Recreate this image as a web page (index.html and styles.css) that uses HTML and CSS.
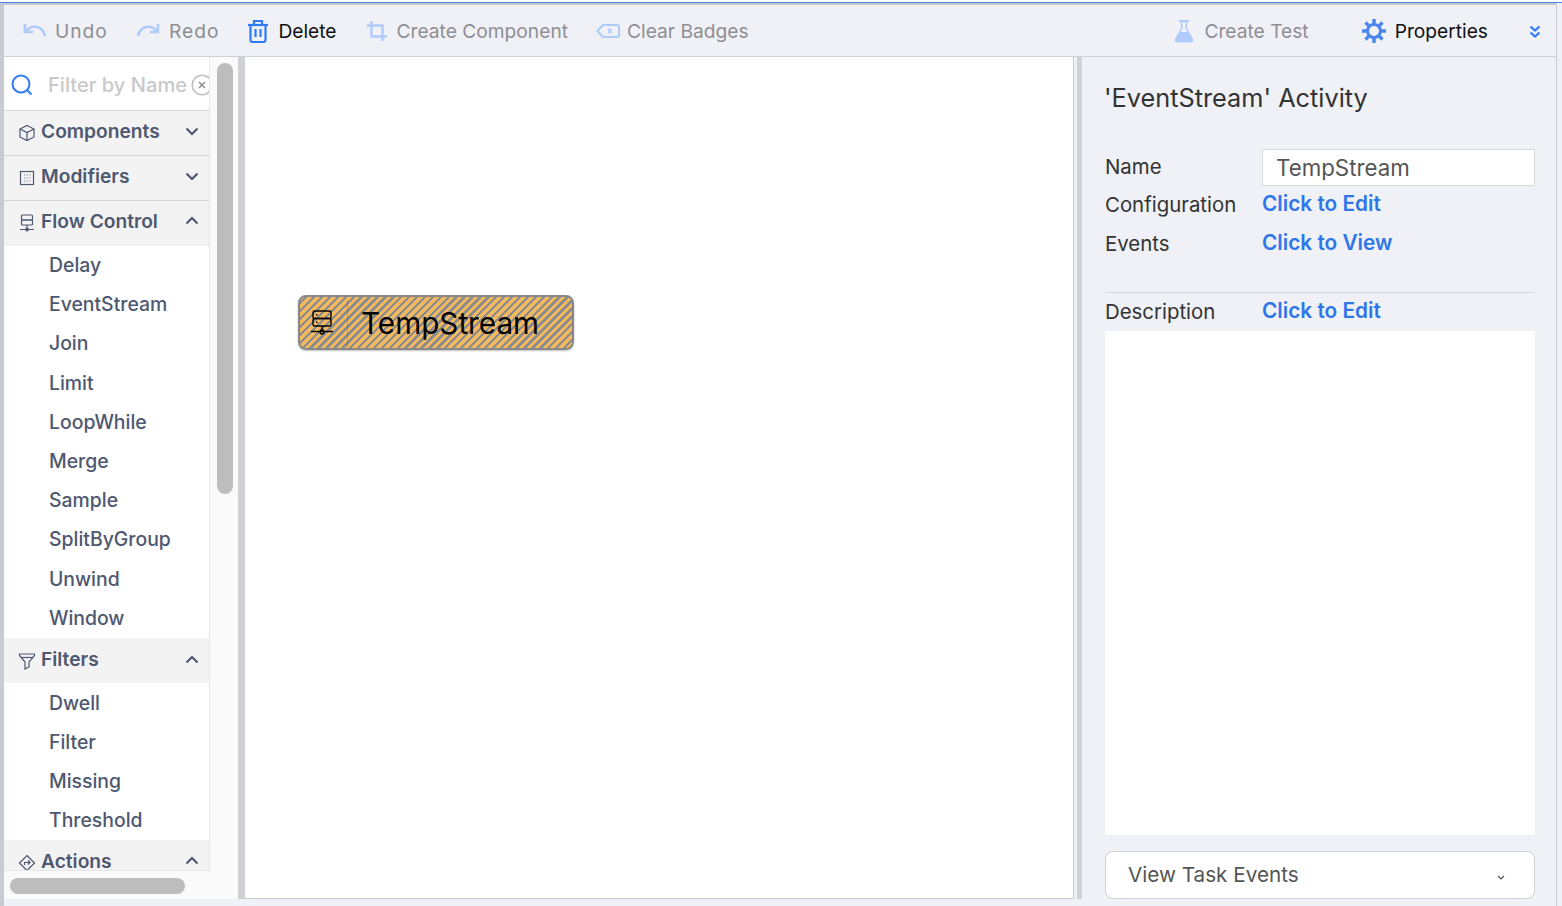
FILE: index.html
```html
<!DOCTYPE html>
<html lang="en">
<head>
    <meta charset="UTF-8">
    <title>EventStream Activity</title>
    <link rel="stylesheet" href="styles.css">
</head>
<body>
    <div class="app">
        <div class="toolbar">
            <div class="tool muted wide">
                <svg width="24" height="18" viewBox="0 0 24 18" fill="none" stroke="#aecbfa" stroke-width="2.6"><path d="M2 2v8h8"/><path d="M2.500 9.500C6 5.500 10 4 14 5c4 1 7 4 8 9"/></svg>
                <span>Undo</span>
            </div>
            <div class="tool muted wide redo">
                <svg width="24" height="18" viewBox="0 0 24 18" fill="none" stroke="#aecbfa" stroke-width="2.6"><path d="M22 2v8h-8"/><path d="M21.500 9.500C18 5.500 14 4 10 5c-4 1-7 4-8 9"/></svg>
                <span>Redo</span>
            </div>
            <div class="tool active delete">
                <svg width="22" height="24" viewBox="0 0 22 24" fill="none" stroke="#2f7bf6" stroke-width="2.2"><path d="M1 6h20"/><path d="M7 5V2h8v3"/><path d="M3.500 6v15a2 2 0 0 0 2 2h11a2 2 0 0 0 2-2V6"/><path d="M8.500 10v8M13.500 10v8"/></svg>
                <span>Delete</span>
            </div>
            <div class="tool muted create">
                <svg width="20" height="20" viewBox="0 0 20 20" fill="none" stroke="#aecbfa" stroke-width="2.4"><path d="M4.500 0v15.500H20"/><path d="M0 4.500h15.500V20"/></svg>
                <span>Create Component</span>
            </div>
            <div class="tool muted clear">
                <svg width="24" height="16" viewBox="0 0 24 16" fill="none" stroke="#aecbfa" stroke-width="2.2"><path d="M7 2h14a2 2 0 0 1 2 2v8a2 2 0 0 1-2 2H7L1.500 8z"/><path d="M12 6l3.500 4M15.500 6L12 10" stroke-width="1.6"/></svg>
                <span>Clear Badges</span>
            </div>
            <div class="tool muted test">
                <svg width="20" height="24" viewBox="0 0 20 24"><path d="M5 1h10v2h-2v6l6 11a2.300 2.300 0 0 1-2 3.500H3A2.300 2.300 0 0 1 1 20l6-11V3H5z" fill="#aecbfa"/><path d="M8.500 3h3v6.500l2 3.500h-7l2-3.500z" fill="#eff1f6"/></svg>
                <span>Create Test</span>
            </div>
            <div class="tool active props">
                <svg width="26" height="26" viewBox="0 0 26 26" fill="none" stroke="#4a86ee"><circle cx="13" cy="13" r="6.500" stroke-width="3"/><path d="M13 1v5M13 20v5M1 13h5M20 13h5M4.500 4.500l3.600 3.600M17.900 17.900l3.600 3.600M21.500 4.500l-3.600 3.600M8.100 17.900l-3.600 3.600" stroke-width="3.400"/></svg>
                <span>Properties</span>
            </div>
            <svg class="collapse" width="12" height="14" viewBox="0 0 12 14" fill="none" stroke="#2f7bf6" stroke-width="2.2"><path d="M1.500 1.500L6 5.500l4.500-4M1.500 7.500L6 11.500l4.500-4"/></svg>
        </div>

        <div class="main">
            <div class="palette">
                <div class="palette-inner">
                    <div class="palette-list">
                        <div class="search">
                            <svg width="22" height="22" viewBox="0 0 22 22" fill="none" stroke="#2f7bf6" stroke-width="2"><circle cx="10" cy="10" r="8.500"/><path d="M16.500 16.500l4 4"/></svg>
                            <span class="search-text">Filter by Name</span>
                            <svg class="search-clear" width="22" height="22" viewBox="0 0 22 22" fill="none" stroke="#bdbdbd" stroke-width="1.5"><circle cx="11" cy="11" r="9.800"/><path d="M8 8l6 6M14 8l-6 6" stroke="#8d8d8d"/></svg>
                        </div>

                        <div class="group-head bordered">
                            <svg class="group-icon" width="18" height="18" viewBox="0 0 18 18" fill="none" stroke="#4e5870" stroke-width="1.2"><path d="M9 1.500l7 3.500v8l-7 3.500L2 13V5z"/><path d="M2 5l7 3.500L16 5M9 8.500v8"/></svg>
                            <span>Components</span>
                            <svg class="chev" width="14" height="9" viewBox="0 0 14 9" fill="none" stroke="#4e5870" stroke-width="2.2"><path d="M1.500 1.500L7 7l5.500-5.500"/></svg>
                        </div>
                        <div class="group-head bordered">
                            <svg class="group-icon" width="18" height="18" viewBox="0 0 18 18" fill="none" stroke="#4e5870" stroke-width="1.2"><rect x="2.500" y="2.500" width="13" height="13"/><path d="M6 6h.8M8.700 6h.8M11.500 6h.8M6 9h.8M8.700 9h.8M11.500 9h.8M6 12h.8M8.700 12h.8M11.500 12h.8"/></svg>
                            <span>Modifiers</span>
                            <svg class="chev" width="14" height="9" viewBox="0 0 14 9" fill="none" stroke="#4e5870" stroke-width="2.2"><path d="M1.500 1.500L7 7l5.500-5.500"/></svg>
                        </div>
                        <div class="group-head flow">
                            <svg class="group-icon" width="18" height="18" viewBox="0 0 18 18" fill="none" stroke="#4e5870" stroke-width="1.2"><rect x="3.500" y="1" width="11" height="5" rx="1"/><rect x="3.500" y="6" width="11" height="5" rx="1"/><path d="M9 11v4M2 15.500h14"/><circle cx="9" cy="15.500" r="1.300"/></svg>
                            <span>Flow Control</span>
                            <svg class="chev" width="14" height="9" viewBox="0 0 14 9" fill="none" stroke="#4e5870" stroke-width="2.2"><path d="M1.500 7.500L7 2l5.500 5.500"/></svg>
                        </div>
                        <div class="group-items">
                            <div class="item">Delay</div>
                            <div class="item">EventStream</div>
                            <div class="item">Join</div>
                            <div class="item">Limit</div>
                            <div class="item">LoopWhile</div>
                            <div class="item">Merge</div>
                            <div class="item">Sample</div>
                            <div class="item">SplitByGroup</div>
                            <div class="item">Unwind</div>
                            <div class="item">Window</div>
                        </div>
                        <div class="group-head filters">
                            <svg class="group-icon" width="18" height="18" viewBox="0 0 18 18" fill="none" stroke="#4e5870" stroke-width="1.2"><path d="M1.500 2h15v1.500L11 10v5l-4 2v-7L1.500 3.500z"/><path d="M3 5.500h12"/></svg>
                            <span>Filters</span>
                            <svg class="chev" width="14" height="9" viewBox="0 0 14 9" fill="none" stroke="#4e5870" stroke-width="2.2"><path d="M1.500 7.500L7 2l5.500 5.500"/></svg>
                        </div>
                        <div class="group-items filter-items">
                            <div class="item">Dwell</div>
                            <div class="item">Filter</div>
                            <div class="item">Missing</div>
                            <div class="item">Threshold</div>
                        </div>
                        <div class="group-head last">
                            <svg class="group-icon" width="18" height="18" viewBox="0 0 18 18" fill="none" stroke="#4e5870" stroke-width="1.2"><path d="M9 1.500L16.500 9 9 16.500 1.500 9z"/><path d="M6.500 11V8.500h5M10 6.500l2 2-2 2"/></svg>
                            <span>Actions</span>
                            <svg class="chev" width="14" height="9" viewBox="0 0 14 9" fill="none" stroke="#4e5870" stroke-width="2.2"><path d="M1.500 7.500L7 2l5.500 5.500"/></svg>
                        </div>
                    </div>
                    <div class="scroll-v"><div class="thumb-v"></div></div>
                </div>
                <div class="scroll-h"><div class="thumb-h"></div></div>
            </div>

            <div class="canvas">
                <div class="node">
                    <svg width="24" height="26" viewBox="0 0 24 26" fill="none" stroke="#000" stroke-width="1.4"><rect x="3" y="1" width="18" height="7.500" rx="1.500"/><rect x="3" y="8.500" width="18" height="7.500" rx="1.500"/><path d="M6 4.700h1.500M6 12.200h1.500M12 16v5M1 21.500h22"/><circle cx="12" cy="22" r="2"/></svg>
                    <span class="node-name">TempStream</span>
                </div>
            </div>

            <div class="panel">
                <h2 class="panel-title">'EventStream' Activity</h2>
                <div class="fields">
                    <label class="name-label">Name</label>
                    <div class="name-input">TempStream</div>
                    <label class="config-label">Configuration</label>
                    <a class="link config-link">Click to Edit</a>
                    <label class="events-label">Events</label>
                    <a class="link events-link">Click to View</a>
                </div>
                <div class="desc-row">
                    <label>Description</label>
                    <a class="link desc-link">Click to Edit</a>
                </div>
                <div class="desc-box"></div>
                <div class="select-box">
                    <span>View Task Events</span>
                    <svg width="8" height="5" viewBox="0 0 8 5" fill="none" stroke="#555" stroke-width="1.2"><path d="M1 1l3 3 3-3"/></svg>
                </div>
            </div>
        </div>
    </div>
</body>
</html>
```

FILE: styles.css
```css
html, body {
    margin: 0;
    height: 100%;
    overflow: hidden;
}
body {
    font-family: Inter, "Liberation Sans", sans-serif;
    background-color: #eff1f6;
}
svg {
    flex: none;
    display: block;
}
.app {
    height: 906px;
    box-sizing: border-box;
    padding: 2px 5px 0 0;
    background: linear-gradient(#fff 2px, #eff1f6 2px);
    display: flex;
    flex-direction: column;
    position: relative;
}
.app::before {
    content: "";
    position: absolute;
    left: 0;
    right: 0;
    top: 2px;
    height: 1px;
    background-color: #4a86ee;
}
.toolbar {
    height: 51px;
    margin-top: 1px;
    padding-left: 19px;
    padding-right: 15px;
    border-top: 2px solid #c9c9cc;
    border-bottom: 1px solid #d0d1d6;
    border-left: 4px solid #c9cbd2;
    border-right: 1px solid #c9cbd2;
    display: flex;
    align-items: center;
    gap: 28px;
    background-color: #eff1f6;
}
.tool {
    display: flex;
    align-items: center;
    gap: 8px;
    font-size: 19.2px;
    color: #111;
}
.tool.muted {
    color: #8e8e93;
}
.wide {
    letter-spacing: 1px;
}
.redo {
    gap: 9px;
}
.delete {
    gap: 9px;
}
.create {
    margin-left: 2px;
    gap: 10px;
}
.clear {
    gap: 7px;
}
.test {
    margin-left: auto;
    gap: 10px;
}
.props {
    margin-left: 24px;
}
.collapse {
    margin-left: 13px;
    margin-top: 3px;
}
.main {
    flex: 1;
    display: flex;
    min-height: 0;
    padding-bottom: 7px;
    border-left: 4px solid #c9cbd2;
    border-right: 1px solid #c9cbd2;
}
.palette {
    width: 234px;
    display: flex;
    flex-direction: column;
    background-color: #fafafa;
    border-right: 6px solid #d0d1d6;
}
.palette-inner {
    flex: 1;
    display: flex;
    min-height: 0;
}
.palette-list {
    width: 206px;
    background-color: #fff;
    overflow: hidden;
    border-right: 1px solid #e6e6e8;
    border-bottom: 1px solid #e6e6e8;
}
.search {
    height: 54px;
    box-sizing: border-box;
    display: flex;
    align-items: center;
    padding-left: 7px;
    padding-top: 3px;
    border-bottom: 1px solid #d5d6da;
}
.search-text {
    margin-left: 15px;
    font-size: 20.1px;
    font-weight: 500;
    color: #c9c9c9;
    white-space: nowrap;
}
.search-clear {
    margin-left: 4px;
}
.group-head {
    height: 45px;
    box-sizing: border-box;
    display: flex;
    align-items: center;
    padding-left: 14px;
    padding-right: 10px;
    padding-bottom: 4px;
    gap: 5px;
    background-color: #f3f3f4;
    color: #4e5870;
    font-size: 19.2px;
    font-weight: 600;
}
.group-head.bordered {
    border-bottom: 1px solid #d5d6da;
}
.group-head.flow {
    padding-bottom: 6px;
}
.group-head.filters {
    padding-bottom: 2px;
}
.group-head.last {
    padding-bottom: 3px;
}
.group-icon {
    margin-top: 4px;
}
.chev {
    margin-left: auto;
}
.item {
    height: 39.2px;
    line-height: 39.2px;
    padding-left: 45px;
    color: #4e5870;
    font-size: 19.4px;
    font-weight: 500;
}
.filter-items .item {
    line-height: 40.4px;
}
.scroll-v {
    flex: 1;
    padding: 6px 5px 0 7px;
}
.thumb-v {
    width: 16px;
    height: 431px;
    border-radius: 8px;
    background-color: #bdbdbd;
}
.scroll-h {
    height: 28px;
    box-sizing: border-box;
    padding: 7px 0 0 6px;
}
.thumb-h {
    width: 175px;
    height: 16px;
    border-radius: 8px;
    background-color: #bdbdbd;
}
.canvas {
    width: 828px;
    position: relative;
    background-color: #fff;
    border-left: 1px solid #d0d1d6;
    border-right: 1px solid #c9cbd2;
    border-bottom: 1px solid #c9cbd2;
}
.node {
    position: absolute;
    left: 53px;
    top: 238px;
    width: 276px;
    height: 55px;
    box-sizing: border-box;
    border: 2px solid #888;
    border-radius: 8px;
    display: flex;
    align-items: center;
    padding-left: 10px;
    background: repeating-linear-gradient(135deg, #f4b95f 0, #f4b95f 3.2px, #8c8c8c 3.2px, #8c8c8c 5.6px);
    box-shadow: 0 1px 2px rgba(0, 0, 0, 0.25);
}
.node-name {
    margin-left: 27px;
    font-size: 29.7px;
    color: #000;
    position: relative;
}
.node-name::before {
    content: "";
    position: absolute;
    left: -14px;
    top: -6px;
    bottom: -6px;
    width: 1px;
    background-color: rgba(0, 0, 0, 0.15);
}
.panel {
    flex: 1;
    display: flex;
    flex-direction: column;
    padding: 0 21px 0 23px;
    border-left: 5px solid #d0d1d6;
    margin-left: 3px;
    color: #333;
    font-size: 20.4px;
    line-height: 24px;
}
.panel-title {
    margin: 25px 0 0 -1px;
    font-size: 25.3px;
    line-height: 32px;
    font-weight: 400;
    color: #333;
}
.fields {
    display: grid;
    grid-template-columns: 157px 1fr;
    margin-top: 35px;
    padding-bottom: 36px;
    border-bottom: 1px solid #d5d6da;
    align-items: start;
}
.name-label {
    margin-top: 6px;
}
.name-input {
    height: 37px;
    box-sizing: border-box;
    border: 1px solid #d9d9dc;
    background-color: #fff;
    padding-left: 13px;
    font-size: 22.3px;
    line-height: 35px;
    color: #555;
}
.config-label {
    margin-top: 7px;
}
.config-link {
    margin-top: 6px;
}
.events-label {
    margin-top: 15px;
}
.events-link {
    margin-top: 14px;
}
.link {
    color: #2f76e8;
    font-weight: 600;
    font-size: 20.8px;
}
.desc-row {
    display: grid;
    grid-template-columns: 157px 1fr;
    margin-top: 7px;
    height: 31px;
}
.desc-link {
    margin-top: -1px;
}
.desc-box {
    flex: 1;
    background-color: #fff;
}
.select-box {
    height: 48px;
    box-sizing: border-box;
    margin-top: 16px;
    border: 1px solid #d0d1d6;
    border-radius: 8px;
    background-color: #fff;
    display: flex;
    align-items: center;
    justify-content: space-between;
    padding: 0 29px 0 22px;
    color: #555;
    font-size: 20.7px;
}
.select-box svg {
    margin-top: 5px;
}
```
